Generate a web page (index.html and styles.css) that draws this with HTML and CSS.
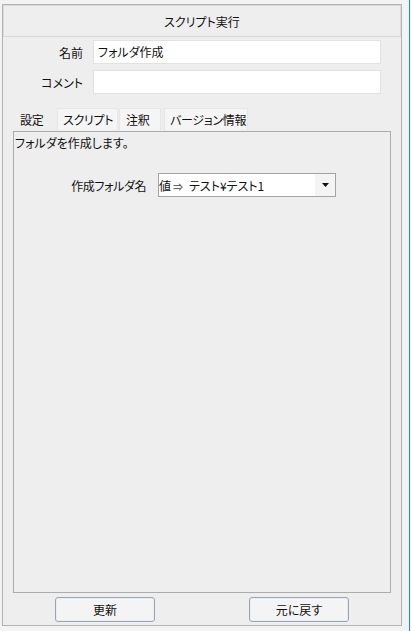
FILE: index.html
```html
<!DOCTYPE html>
<html lang="ja">
<head>
    <meta charset="UTF-8">
    <meta name="viewport" content="width=device-width, initial-scale=1.0">
    <title>スクリプト実行</title>
    <link rel="stylesheet" href="styles.css">
</head>
<body>
    <div class="screen">
        <div class="panel">
            <div class="panel-title">スクリプト実行</div>

            <div class="fields">
                <div class="field">
                    <span class="field-label">名前</span>
                    <div class="field-input">フォルダ作成</div>
                </div>
                <div class="field">
                    <span class="field-label">コメント</span>
                    <div class="field-input"></div>
                </div>
            </div>

            <div class="tabs">
                <div class="tab-strip">
                    <div class="tab tab-active tab-settings">設定</div>
                    <div class="tab tab-script">スクリプト</div>
                    <div class="tab tab-note">注釈</div>
                    <div class="tab tab-version">バージョン情報</div>
                </div>
                <div class="tab-body">
                    <p class="desc">フォルダを作成します。</p>
                    <div class="param">
                        <span class="param-label">作成フォルダ名</span>
                        <div class="combo">
                            <span class="combo-kind">値<span class="combo-arrow">⇒</span></span>
                            <span class="combo-value">テスト¥テスト1</span>
                            <span class="combo-btn">
                                <svg width="7" height="4" viewBox="0 0 7 4"><path d="M0 0h7L3.5 4z" fill="#111"/></svg>
                            </span>
                        </div>
                    </div>
                </div>
            </div>

            <div class="actions">
                <button class="btn">更新</button>
                <button class="btn">元に戻す</button>
            </div>
        </div>
    </div>
</body>
</html>
```

FILE: styles.css
```css
html, body {
    margin: 0;
    padding: 0;
    height: 100%;
    background: #f3f3f3;
    color: #111;
    font-family: "Noto Sans CJK JP", "Noto Sans", sans-serif;
    font-size: 12px;
    font-feature-settings: "palt";
}

.screen {
    box-sizing: border-box;
    width: 410px;
    height: 631px;
    padding: 4px 0 0 2px;
    border-right: 1px solid #1c8be6;
}

.panel {
    box-sizing: border-box;
    width: 400px;
    height: 622px;
    background: #eeeeee;
    border: 1px solid #b3b3b3;
    display: flex;
    flex-direction: column;
}

.panel-title {
    box-sizing: border-box;
    height: 32px;
    border: 1px solid #dadada;
    display: flex;
    align-items: center;
    justify-content: center;
    padding-top: 1px;
}

/* name / comment */
.fields {
    display: flex;
    flex-direction: column;
    gap: 6px;
    margin-top: 3px;
}

.field {
    display: flex;
    align-items: center;
}

.field-label {
    box-sizing: border-box;
    width: 90px;
    padding-right: 10px;
    text-align: right;
}

.field-input {
    box-sizing: border-box;
    width: 288px;
    height: 24px;
    background: #fff;
    border: 1px solid #e1e1e1;
    padding: 0 4px;
    line-height: 22px;
}

/* tabs */
.tabs {
    margin: 14px 10px 0 10px;
    display: flex;
    flex-direction: column;
    flex: 1;
}

.tab-strip {
    display: flex;
    height: 23px;
}

.tab {
    box-sizing: border-box;
    height: 22px;
    margin-right: 1px;
    padding-left: 5px;
    background: #f5f5f5;
    border: 1px solid #e6e6e6;
    border-bottom: none;
    line-height: 21px;
    white-space: nowrap;
    letter-spacing: -0.3px;
}

.tab-active {
    background: #eeeeee;
    border-color: #eeeeee;
    padding-left: 6px;
}

.tab-settings { width: 43px; }
.tab-script { width: 61px; }
.tab-note { width: 42px; margin-right: 3px; padding-left: 6px; }
.tab-version { width: 84px; }

.tab-body {
    flex: 1;
    border: 1px solid #acacac;
    padding: 0 1px;
}

.desc {
    margin: 3px 0 0;
    line-height: 16px;
}

.param {
    display: flex;
    align-items: center;
    margin-top: 22px;
}

.param-label {
    box-sizing: border-box;
    width: 143px;
    padding-right: 12px;
    text-align: right;
    letter-spacing: -0.4px;
}

.combo {
    box-sizing: border-box;
    width: 178px;
    height: 24px;
    background: #fff;
    border: 1px solid #a3a3a3;
    display: flex;
    align-items: center;
}

.combo-kind {
    width: 30px;
}

.combo-arrow {
    font-size: 10px;
    color: #444;
    margin-left: 2px;
}

.combo-value {
    flex: 1;
}

.combo-btn {
    width: 20px;
    height: 22px;
    background: #f4f4f4;
    display: flex;
    align-items: center;
    justify-content: center;
}

/* bottom buttons */
.actions {
    display: flex;
    justify-content: center;
    gap: 94px;
    margin: 4px 0 3px;
}

.btn {
    box-sizing: border-box;
    width: 100px;
    height: 25px;
    background: #f4f4f4;
    border: 1px solid #9da4ad;
    border-radius: 3px;
    box-shadow: inset 0 0 0 1px #e4eef8;
    font: inherit;
    color: #111;
    padding: 0;
}
```
